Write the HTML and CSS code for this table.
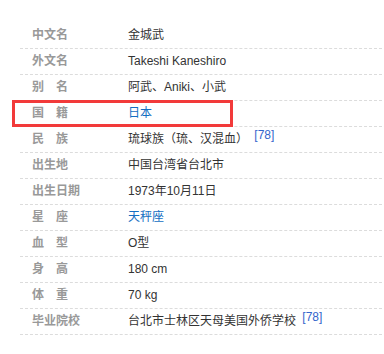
FILE: index.html
```html
<!DOCTYPE html>
<html lang="zh-CN">
<head>
<meta charset="utf-8">
<link rel="stylesheet" href="styles.css">
</head>
<body>
<dl class="info">
  <div class="row"><dt class="name">中文名</dt><dd class="value">金城武</dd></div>
  <div class="row"><dt class="name">外文名</dt><dd class="value">Takeshi Kaneshiro</dd></div>
  <div class="row"><dt class="name">别&emsp;名</dt><dd class="value">阿武、Aniki、小武</dd></div>
  <div class="row highlighted"><dt class="name">国&emsp;籍</dt><dd class="value"><a class="link">日本</a></dd><span class="mark"></span></div>
  <div class="row"><dt class="name">民&emsp;族</dt><dd class="value">琉球族（琉、汉混血） <sup class="ref">[78]</sup></dd></div>
  <div class="row"><dt class="name">出生地</dt><dd class="value">中国台湾省台北市</dd></div>
  <div class="row"><dt class="name">出生日期</dt><dd class="value">1973年10月11日</dd></div>
  <div class="row"><dt class="name">星&emsp;座</dt><dd class="value"><a class="link">天秤座</a></dd></div>
  <div class="row"><dt class="name">血&emsp;型</dt><dd class="value">O型</dd></div>
  <div class="row"><dt class="name">身&emsp;高</dt><dd class="value">180 cm</dd></div>
  <div class="row"><dt class="name">体&emsp;重</dt><dd class="value">70 kg</dd></div>
  <div class="row"><dt class="name">毕业院校</dt><dd class="value">台北市士林区天母美国外侨学校 <sup class="ref">[78]</sup></dd></div>
</dl>
</body>
</html>
```

FILE: styles.css
```css
html, body {
  margin: 0;
  padding: 0;
  background: #fff;
}
body {
  font-family: "Liberation Sans", "Noto Sans CJK SC", sans-serif;
  font-size: 12px;
}
.info {
  margin: 0;
  padding: 23px 2px 0 20px;
}
.row {
  position: relative;
  display: flex;
  height: 25px;
  line-height: 25px;
  border-bottom: 1px dashed #dcdcdc;
}
.name {
  width: 96px;
  padding-left: 12px;
  margin: 0;
  color: #999;
  font-weight: bold;
  white-space: nowrap;
}
.value {
  margin: 0;
  color: #333;
  white-space: nowrap;
}
.link {
  color: #136ec2;
  text-decoration: none;
}
.ref {
  font-size: 12px;
  line-height: 12px;
  vertical-align: 4px;
  padding: 0 3px;
  color: #3366cc;
}
.mark {
  position: absolute;
  left: -8px;
  top: -1px;
  width: 221px;
  height: 27px;
  box-sizing: border-box;
  border: 3px solid #f23a3a;
}
```
